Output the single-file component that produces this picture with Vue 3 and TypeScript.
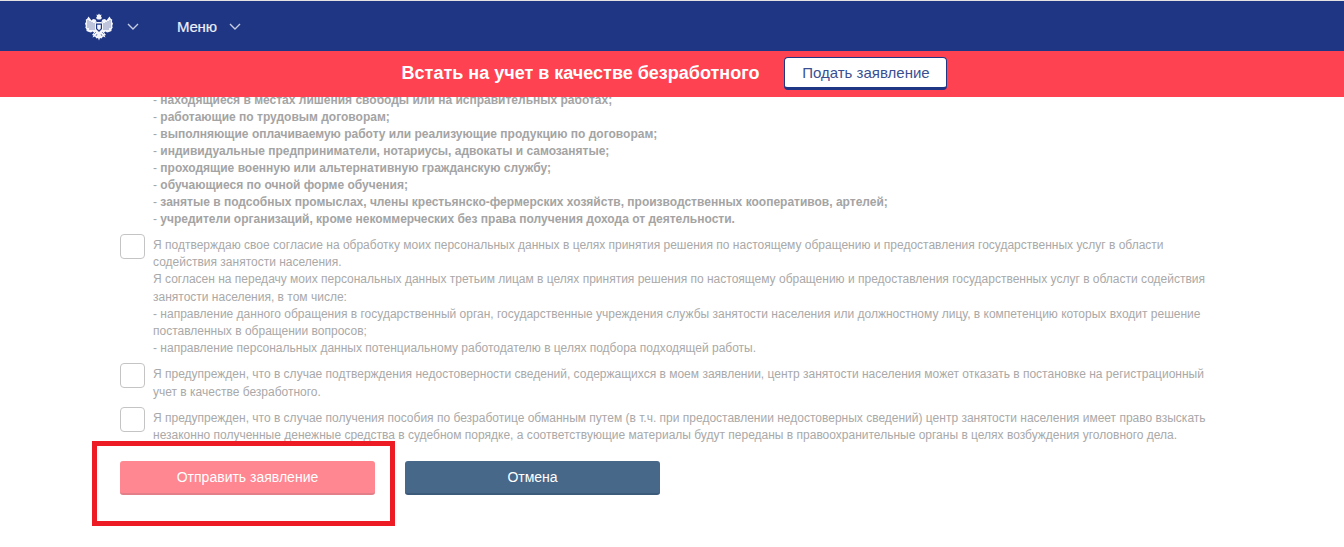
<script setup lang="ts">
const duties: string[] = [
  "находящиеся в местах лишения свободы или на исправительных работах;",
  "работающие по трудовым договорам;",
  "выполняющие оплачиваемую работу или реализующие продукцию по договорам;",
  "индивидуальные предприниматели, нотариусы, адвокаты и самозанятые;",
  "проходящие военную или альтернативную гражданскую службу;",
  "обучающиеся по очной форме обучения;",
  "занятые в подсобных промыслах, члены крестьянско-фермерских хозяйств, производственных кооперативов, артелей;",
  "учредители организаций, кроме некоммерческих без права получения дохода от деятельности.",
];

const agreements: string[][] = [
  [
    "Я подтверждаю свое согласие на обработку моих персональных данных в целях принятия решения по настоящему обращению и предоставления государственных услуг в области содействия занятости населения.",
    "Я согласен на передачу моих персональных данных третьим лицам в целях принятия решения по настоящему обращению и предоставления государственных услуг в области содействия занятости населения, в том числе:",
    "- направление данного обращения в государственный орган, государственные учреждения службы занятости населения или должностному лицу, в компетенцию которых входит решение поставленных в обращении вопросов;",
    "- направление персональных данных потенциальному работодателю в целях подбора подходящей работы.",
  ],
  [
    "Я предупрежден, что в случае подтверждения недостоверности сведений, содержащихся в моем заявлении, центр занятости населения может отказать в постановке на регистрационный учет в качестве безработного.",
  ],
  [
    "Я предупрежден, что в случае получения пособия по безработице обманным путем (в т.ч. при предоставлении недостоверных сведений) центр занятости населения имеет право взыскать незаконно полученные денежные средства в судебном порядке, а соответствующие материалы будут переданы в правоохранительные органы в целях возбуждения уголовного дела.",
  ],
];
</script>

<template>
  <div class="page">
    <header class="topbar">
      <svg class="eagle" viewBox="0 0 28 28" aria-hidden="true">
        <!-- wings, body and tail -->
        <path fill="#f4f6fb" d="M12 9 10.500 6.500 8 6 6.500 7.500 5 5.500 3.500 3.500 2 6 .8 6.500 1 9 0 10.500.8 13 .3 14.500 1.500 16.500 1.500 18 4 19 6 19.500 7.500 18.500 9 19.500 7 22 8.500 22.500 7.500 24.500 10 23.500 11.500 25.500 13 25 14 27.500 15 25 16.500 25.500 18 23.500 20.500 24.500 19.500 22.500 21 22 19 19.500 20.500 18.500 22 19.500 24 19 26.500 18 26.500 16.500 27.700 14.500 27.200 13 28 10.500 27 9 27.200 6.500 26 6 24.500 3.500 23 5.500 21.500 7.500 20 6 17.500 6.500 16 9Z" />
        <!-- crowns -->
        <path fill="#f4f6fb" d="M14 .5l1 1.500 1.500-.5-.5 2 1 1.500-1.500 1.500h-3L11 5l1-1.500-.5-2 1.500.5z" />
        <!-- feather gaps -->
        <path fill="none" stroke="#1f3685" stroke-width=".7" opacity=".75" d="M3 7v8M5 8v9M7 9v8M9 10v7M25 7v8M23 8v9M21 9v8M19 10v7M12 6.500l-1 3M16 6.500l1 3M9 21l2-2M19 21l-2-2M11 23l1-2M17 23l-1-2" />
        <!-- shield -->
        <path fill="#1f3685" d="M11 10.500h6v5.500l-3 3-3-3z" />
        <path fill="#f4f6fb" d="M12.200 11.800h3.600v3.700L14 17.300l-1.800-1.800z" />
      </svg>
      <svg class="chevron" viewBox="0 0 12 7" aria-hidden="true"><path d="M1 1l5 5 5-5" /></svg>
      <span class="menu">Меню</span>
      <svg class="chevron" viewBox="0 0 12 7" aria-hidden="true"><path d="M1 1l5 5 5-5" /></svg>
    </header>

    <section class="banner">
      <strong>Встать на учет в качестве безработного</strong>
      <button class="apply" type="button">Подать заявление</button>
    </section>

    <main class="content">
      <ul class="duties">
        <li v-for="line in duties" :key="line">- <b>{{ line }}</b></li>
      </ul>

      <label v-for="(block, i) in agreements" :key="i" class="agreement">
        <span class="box"></span>
        <span class="text">
          <span v-for="line in block" :key="line" class="para">{{ line }}</span>
        </span>
      </label>

      <div class="actions">
        <div class="send-wrap">
          <button class="btn send" type="button">Отправить заявление</button>
          <div class="annotation"></div>
        </div>
        <button class="btn cancel" type="button">Отмена</button>
      </div>
    </main>
  </div>
</template>

<style>
html,
body {
  margin: 0;
  background: #fff;
  overflow: hidden;
}
</style>

<style scoped>
.page {
  height: 547px;
  display: flex;
  flex-direction: column;
  overflow: hidden;
  font-family: "Liberation Sans", Arial, sans-serif;
}

.topbar {
  flex: none;
  box-sizing: border-box;
  height: 51px;
  border-top: 1px solid #e3e3e3;
  background: #1f3685;
  display: flex;
  align-items: center;
  padding-left: 85px;
  color: #fff;
}

.eagle {
  width: 28px;
  height: 28px;
  margin-right: 14px;
  margin-top: 1px;
}

.chevron {
  width: 12px;
  height: 7px;
  fill: none;
  stroke: #c6cde3;
  stroke-width: 1.4;
  margin-top: 1px;
}

.menu {
  font-size: 15px;
  letter-spacing: -0.2px;
  margin-left: 38px;
  margin-right: 12px;
  color: #eef0f8;
  -webkit-text-stroke: 0.2px #eef0f8;
}

.banner {
  flex: none;
  height: 46px;
  background: #ff4252;
  display: flex;
  align-items: center;
  justify-content: center;
  gap: 25px;
  padding-left: 5px;
  color: #fff;
  position: relative;
  z-index: 1;
}

.banner strong {
  font-size: 18px;
  font-weight: 700;
  margin-top: -1px;
}

.apply {
  box-sizing: border-box;
  width: 163px;
  height: 33px;
  margin-top: -2px;
  background: #fff;
  border: 1px solid #1f3685;
  border-bottom-width: 3px;
  border-radius: 4px;
  color: #3a4f92;
  font: 15px "Liberation Sans", Arial, sans-serif;
  padding: 0;
}

.content {
  flex: 1;
  min-height: 0;
  padding-left: 120px;
  width: 1090px;
  color: #a9a9a9;
  font-size: 12px;
  line-height: 17.2px;
}

.duties {
  list-style: none;
  margin: -5px 0 0;
  padding: 0 0 0 33px;
  line-height: 17px;
  color: #a4a4a4;
}

.duties b {
  font-weight: 700;
}

.agreement {
  display: flex;
  gap: 8px;
  margin-top: 6px;
}

.box {
  flex: none;
  box-sizing: border-box;
  width: 25px;
  height: 25px;
  border: 1px solid #c4c4c4;
  border-radius: 4px;
  background: #fff;
}

.text {
  display: block;
  padding-top: 3px;
}

.para {
  display: block;
}

.actions {
  display: flex;
  gap: 30px;
  margin-top: 17px;
}

.send-wrap {
  position: relative;
}

.btn {
  display: block;
  box-sizing: border-box;
  width: 255px;
  height: 34px;
  border: 0;
  border-radius: 3px;
  color: #fff;
  font: 14px "Liberation Sans", Arial, sans-serif;
  padding: 0;
}

.send {
  background: #ff8791;
  border-bottom: 2px solid #e37f88;
}

.cancel {
  background: #48688a;
  border-bottom: 2px solid #3c5a7a;
}

.annotation {
  position: absolute;
  left: -28px;
  top: -20px;
  width: 303px;
  height: 85px;
  box-sizing: border-box;
  border: 5px solid #ed1c24;
  pointer-events: none;
}
</style>
